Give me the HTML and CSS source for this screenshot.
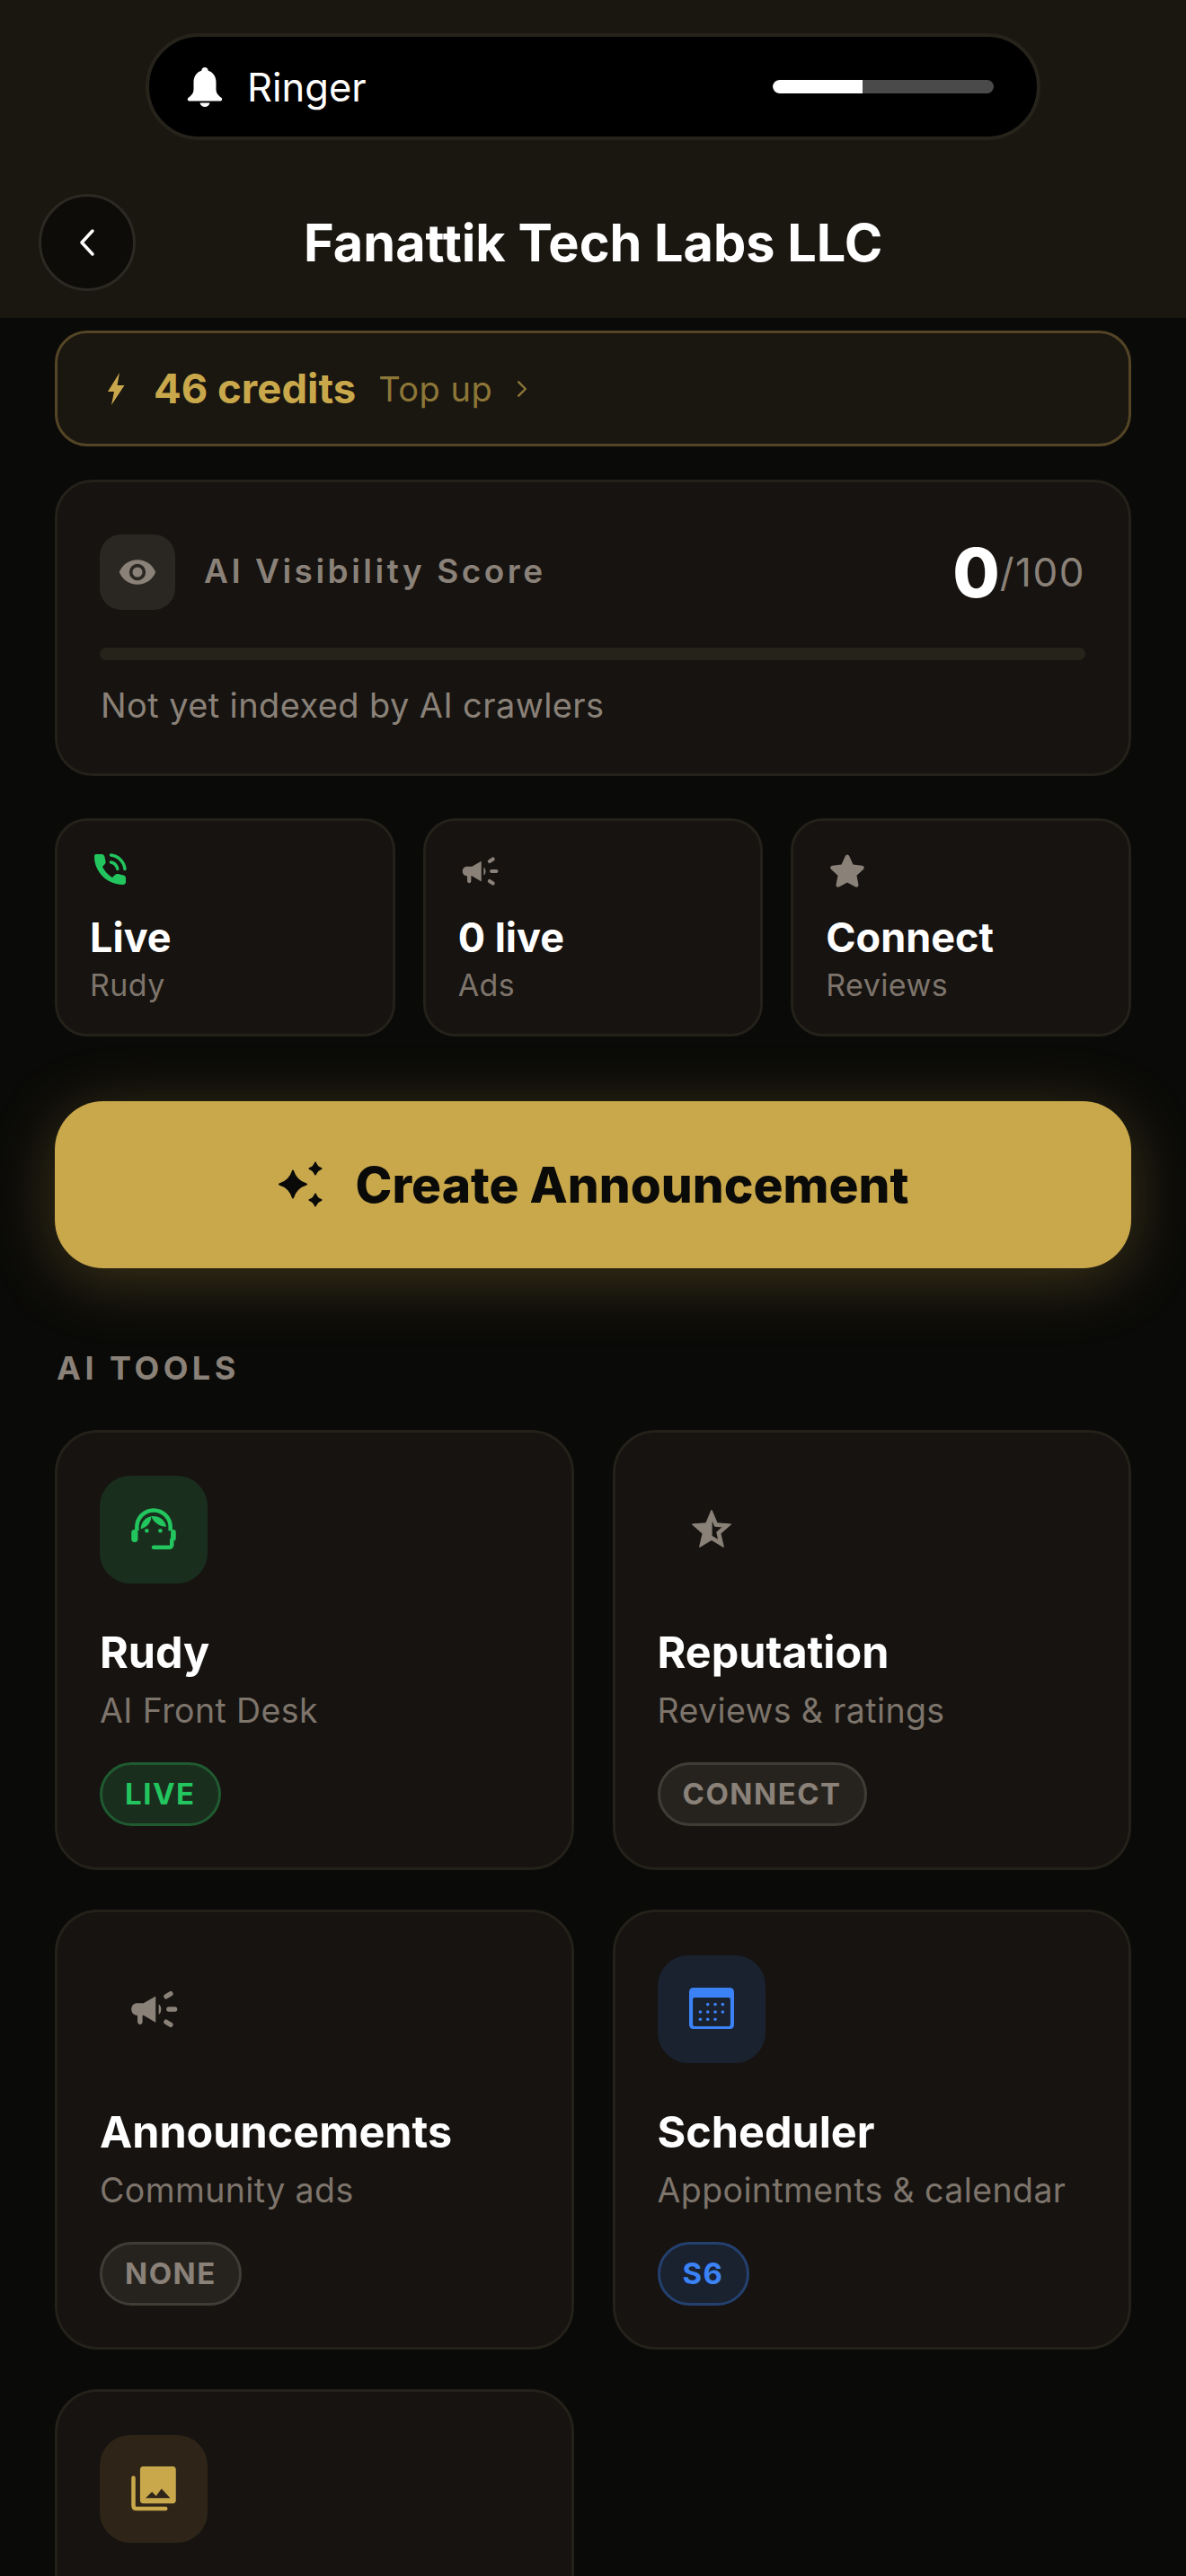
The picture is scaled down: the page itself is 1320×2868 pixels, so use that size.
FILE: index.html
```html
<!DOCTYPE html>
<html>
<head>
    <title>Fanattik Tech Labs LLC</title>
    <link rel="stylesheet" href="styles.css">
</head>
<body>
    <header class="top-bar">
        <div class="ringer">
            <svg class="ringer-bell" viewBox="0 0 40 44"><path d="M20 0c-2.200 0-3.600 1.700-3.800 3.800C10.600 5.500 7.500 10.500 7.500 16.500v7.500c0 4-1.500 6.500-5.500 9.500-2 1.500-1.500 4 1 4h34c2.500 0 3-2.500 1-4-4-3-5.500-5.500-5.500-9.500v-7.500c0-6-3.100-11-8.700-12.700C23.600 1.700 22.200 0 20 0z" fill="#fff"/><path d="M14.500 39.500h11c-.6 2.800-2.700 4.500-5.500 4.500s-4.900-1.700-5.500-4.500z" fill="#fff"/></svg>
            <span class="ringer-label">Ringer</span>
            <div class="ringer-slider"><div class="ringer-level"></div></div>
        </div>
        <div class="title-row">
            <button class="back-btn"><svg viewBox="0 0 20 32"><path d="M16 3 4 16l12 13" fill="none" stroke="#fff" stroke-width="3.500" stroke-linecap="round" stroke-linejoin="round"/></svg></button>
            <h1>Fanattik Tech Labs LLC</h1>
        </div>
    </header>

    <main class="content">
        <div class="credits">
            <svg class="credits-bolt" viewBox="0 0 20 36"><path d="M14 0 1 21h7L5 36 19.500 14H11.500z" fill="#c9a84c"/></svg>
            <span class="credits-count">46 credits</span>
            <span class="credits-topup">Top up</span>
            <svg class="credits-chevron" viewBox="0 0 12 20"><path d="m2.500 3 7 7-7 7" fill="none" stroke="#8c7738" stroke-width="2.200" stroke-linecap="round" stroke-linejoin="round"/></svg>
        </div>

        <section class="score-card">
            <div class="score-head">
                <div class="score-icon">
                    <svg viewBox="0 0 24 24"><path d="M12 4.500C7 4.500 2.700 7.600 1 12c1.700 4.400 6 7.500 11 7.500s9.300-3.100 11-7.500c-1.700-4.400-6-7.500-11-7.500zM12 17a5 5 0 1 1 0-10 5 5 0 0 1 0 10zm0-8a3 3 0 1 0 0 6 3 3 0 0 0 0-6z" fill="#8a8178"/></svg>
                </div>
                <span class="score-title">AI Visibility Score</span>
                <div class="score-value"><b>0</b><span>/100</span></div>
            </div>
            <div class="score-track"></div>
            <p class="score-note">Not yet indexed by AI crawlers</p>
        </section>

        <div class="stats">
            <div class="stat">
                <svg class="stat-icon" viewBox="-2 -1 42 42"><path d="M2 1h6c2 0 3 1 3.500 3l1 5c.3 1.500-.2 2.500-1.200 3.500L9 15c2.500 5 6 9 11 12l3-3c1-1 2-1.300 3.500-1l6 1.500c1.500.4 2.500 1.500 2.500 3V32c0 2-1.500 3-3.500 3C15 35 0 21 0 4 0 2 .5 1 2 1z" fill="#22c55e"/><path d="M18.500 2c8 1 14.500 7 15.500 15.500M18.500 10c3.700.7 6.500 3.500 7.300 7.500" fill="none" stroke="#22c55e" stroke-width="3.500" stroke-linecap="round"/></svg>
                <div class="stat-value">Live</div>
                <div class="stat-label">Rudy</div>
            </div>
            <div class="stat">
                <svg class="stat-icon" viewBox="0 0 24 24"><use href="#megaphone"/></svg>
                <div class="stat-value">0 live</div>
                <div class="stat-label">Ads</div>
            </div>
            <div class="stat">
                <svg class="stat-icon" viewBox="0 .6 24 24"><path d="M12 2c.6 0 1 .4 1.300 1l2.400 5.300 5.700.7c1.300.2 1.800 1.500.8 2.400l-4.200 3.900 1.100 5.700c.3 1.300-1 2.200-2.100 1.500L12 19.700l-5 2.800c-1.100.7-2.400-.2-2.100-1.500L6 15.300l-4.200-3.900c-1-.9-.5-2.200.8-2.400l5.700-.7L10.700 3c.3-.6.700-1 1.300-1z" fill="#8a8178"/></svg>
                <div class="stat-value">Connect</div>
                <div class="stat-label">Reviews</div>
            </div>
        </div>

        <button class="cta">
            <svg class="cta-icon" viewBox="0 0 52 52"><path d="M17 10.500Q20.500 22 32 25.500 20.500 29 17 40.500 13.500 29 2 25.500 13.500 22 17 10.500zM42 1.500Q43.700 6.300 48.500 8 43.700 9.700 42 14.500 40.300 9.700 35.500 8 40.300 6.300 42 1.500zM42 36.500Q43.700 41.300 48.500 43 43.700 44.700 42 49.500 40.300 44.700 35.500 43 40.300 41.300 42 36.500z" fill="#0a0a08" stroke="#0a0a08" stroke-width="2" stroke-linejoin="round"/></svg>
            Create Announcement
        </button>

        <h2 class="section-label">AI TOOLS</h2>

        <div class="tools">
            <div class="tool">
                <div class="tool-icon tint-green">
                    <svg viewBox="0 0 24 24"><path d="M3.700 12.500v-1.800a8.300 8.300 0 0 1 16.600 0v1.800" fill="none" stroke="#22c55e" stroke-width="2"/><rect x="1" y="12" width="3.200" height="6.200" rx="1.500" fill="#22c55e"/><rect x="20.500" y="12" width="2.500" height="5.500" rx="1.200" fill="#22c55e"/><path d="M21 17v2.500c0 .8-.6 1.300-1.300 1.300H12" fill="none" stroke="#22c55e" stroke-width="2" stroke-linecap="round"/><path d="M10.800 5.400C7.500 6 5.800 8.500 5.600 11.700 8.800 10.800 10.800 8.500 10.800 5.400zM10.800 5.400C14.500 5 17.500 7 18.300 10.500 15 10.500 12 8.500 10.800 5.400z" fill="#22c55e"/><circle cx="8.600" cy="12.600" r="1" fill="#22c55e"/><circle cx="15.300" cy="12.600" r="1" fill="#22c55e"/></svg>
                </div>
                <div class="tool-name">Rudy</div>
                <div class="tool-sub">AI Front Desk</div>
                <span class="pill pill-green">LIVE</span>
            </div>
            <div class="tool">
                <div class="tool-icon">
                    <svg viewBox="0 0 24 24"><path transform="translate(.6 .6) scale(.95)" d="M22 9.240l-7.190-.62L12 2 9.190 8.630 2 9.240l5.460 4.730L5.820 21 12 17.270 18.180 21l-1.630-7.030L22 9.240zM12 15.400V6.100l1.710 4.040 4.380.38-3.320 2.880 1 4.280L12 15.400z" fill="#8a8178" stroke="#8a8178" stroke-width=".6" stroke-linejoin="round"/></svg>
                </div>
                <div class="tool-name">Reputation</div>
                <div class="tool-sub">Reviews &amp; ratings</div>
                <span class="pill pill-grey">CONNECT</span>
            </div>
            <div class="tool">
                <div class="tool-icon">
                    <svg viewBox="0 0 24 24"><use href="#megaphone"/></svg>
                </div>
                <div class="tool-name">Announcements</div>
                <div class="tool-sub">Community ads</div>
                <span class="pill pill-grey">NONE</span>
            </div>
            <div class="tool">
                <div class="tool-icon tint-blue">
                    <svg viewBox="0 0 24 24"><path d="M2.900 1.300h18.200c1.100 0 2 .9 2 2v16.500c0 1.100-.9 2-2 2H2.900c-1.100 0-2-.9-2-2V3.300c0-1.100.9-2 2-2zm.8 4.900c-.6 0-1 .4-1 1v12.200c0 .6.4 1 1 1h16.600c.6 0 1-.4 1-1V7.200c0-.6-.4-1-1-1z" fill="#3b82f6" fill-rule="evenodd"/><g fill="#3b82f6"><circle cx="10.100" cy="9.600" r=".8"/><circle cx="13.800" cy="9.600" r=".8"/><circle cx="17.500" cy="9.600" r=".8"/><circle cx="6.400" cy="13.300" r=".8"/><circle cx="10.100" cy="13.300" r=".8"/><circle cx="13.800" cy="13.300" r=".8"/><circle cx="17.500" cy="13.300" r=".8"/><circle cx="6.400" cy="17" r=".8"/><circle cx="10.100" cy="17" r=".8"/><circle cx="13.800" cy="17" r=".8"/></g></svg>
                </div>
                <div class="tool-name">Scheduler</div>
                <div class="tool-sub">Appointments &amp; calendar</div>
                <span class="pill pill-blue">S6</span>
            </div>
            <div class="tool">
                <div class="tool-icon tint-gold">
                    <svg viewBox="0 0 24 24"><path d="M6.800.9h14.700c.9 0 1.500.7 1.500 1.500v15.300c0 .9-.6 1.500-1.500 1.500H6.800c-.9 0-1.500-.6-1.500-1.500V2.400c0-.8.6-1.500 1.500-1.500zM8 16.600h12.200l-4.300-4.700-2.700 3.700-2-2.200z" fill="#c9a84c" fill-rule="evenodd"/><path d="M2 6.500v13.700c0 1 .6 1.600 1.600 1.600h14.300" fill="none" stroke="#c9a84c" stroke-width="2" stroke-linecap="round"/></svg>
                </div>
            </div>
        </div>
    </main>

    <!-- shared megaphone icon -->
    <svg class="icon-defs">
        <symbol id="megaphone" viewBox="0 0 24 24">
            <path d="M1 12c0-1.800 1.200-3 3-3h3l6-3.500v13L7 15H6.500v3c0 1-.5 1.500-1.200 1.500S4 19 4 18v-3c-1.800 0-3-1.200-3-3z" fill="#8a8178"/>
            <path d="M14.500 9.500c1.600.7 1.600 4.300 0 5z" fill="#8a8178"/>
            <path d="M18.200 5.700l2.200-1.400M19.500 12h3M18.200 18.300l2.200 1.400" stroke="#8a8178" stroke-width="2.400" stroke-linecap="round" fill="none"/>
        </symbol>
    </svg>
</body>
</html>
```
FILE: styles.css
```css
html, body {
    height: 2868px;
    overflow: hidden;
}

body {
    font-family: 'Inter', 'Liberation Sans', sans-serif;
    background-color: #0a0a08;
    color: #fff;
    margin: 0;
}

.icon-defs {
    display: none;
}

/* top bar with ringer pill and page title */
.top-bar {
    background-color: #1a1610;
    height: 354px;
    padding-top: 37px;
    box-sizing: border-box;
}

.ringer {
    width: 996px;
    height: 119px;
    margin: 0 auto;
    padding: 0 48px 0 42px;
    box-sizing: border-box;
    display: flex;
    align-items: center;
    background-color: #000;
    border: 4px solid #26231b;
    border-radius: 60px;
}

.ringer-bell {
    width: 40px;
    height: 44px;
    margin-right: 27px;
}

.ringer-label {
    font-size: 43.500px;
    flex: 1;
}

.ringer-slider {
    width: 246px;
    height: 15px;
    background-color: #4a4a4a;
    border-radius: 8px;
    overflow: hidden;
}

.ringer-level {
    width: 100px;
    height: 100%;
    background-color: #fff;
    border-radius: 8px 0 0 8px;
}

.title-row {
    display: flex;
    align-items: center;
    margin-top: 60px;
    padding-left: 43px;
}

.back-btn {
    width: 108px;
    height: 108px;
    padding: 0;
    display: flex;
    align-items: center;
    justify-content: center;
    background-color: #0d0c09;
    border: 3px solid #2b2922;
    border-radius: 50%;
}

.back-btn svg {
    width: 20px;
    height: 32px;
}

.title-row h1 {
    margin: 0 0 0 187px;
    font-size: 57.600px;
    font-weight: 700;
    line-height: 72px;
    white-space: nowrap;
}

.content {
    padding: 14px 61px 0;
}

/* credits strip */
.credits {
    height: 129px;
    box-sizing: border-box;
    display: flex;
    align-items: center;
    padding-left: 55px;
    background-color: #1a1610;
    border: 3px solid #544526;
    border-radius: 36px;
}

.credits-bolt {
    width: 20px;
    height: 36px;
    margin-right: 32px;
}

.credits-count {
    font-size: 45.500px;
    font-weight: 700;
    color: #c9a84c;
    margin-right: 25px;
}

.credits-topup {
    font-size: 38px;
    letter-spacing: .5px;
    color: #8c7738;
    margin-right: 26px;
}

.credits-chevron {
    width: 14px;
    height: 22px;
}

/* visibility score card */
.score-card {
    margin-top: 37px;
    height: 330px;
    box-sizing: border-box;
    padding: 58px 48px 0 47px;
    background-color: #161310;
    border: 3px solid #24211a;
    border-radius: 42px;
}

.score-head {
    display: flex;
    align-items: center;
}

.score-icon {
    width: 84px;
    height: 84px;
    display: flex;
    align-items: center;
    justify-content: center;
    background-color: #2a2722;
    border-radius: 24px;
}

.score-icon svg {
    width: 44px;
    height: 44px;
}

.score-title {
    flex: 1;
    margin-left: 32px;
    padding-bottom: 3px;
    font-size: 37px;
    font-weight: 600;
    letter-spacing: 3.500px;
    color: #8a8178;
}

.score-value {
    display: flex;
    align-items: center;
}

.score-value b {
    font-size: 76px;
    font-weight: 800;
    line-height: 84px;
}

.score-value span {
    font-size: 44px;
    letter-spacing: 1.500px;
    color: #8a8178;
}

.score-track {
    height: 14px;
    margin-top: 42px;
    background-color: #26231b;
    border-radius: 7px;
}

.score-note {
    margin: 25px 0 0 1px;
    font-size: 38px;
    line-height: 50px;
    letter-spacing: .4px;
    color: #8a8178;
}

/* three small status cards */
.stats {
    display: grid;
    grid-template-columns: repeat(3, 1fr);
    gap: 31px;
    margin-top: 47px;
}

.stat {
    height: 243px;
    box-sizing: border-box;
    padding: 35px 36px 0;
    background-color: #161310;
    border: 3px solid #24211a;
    border-radius: 36px;
}

.stat-icon {
    display: block;
    width: 42px;
    height: 42px;
    margin-left: 3px;
}

.stat-value {
    margin-top: 24px;
    font-size: 45px;
    font-weight: 700;
    line-height: 58px;
}

.stat-label {
    margin-top: 2px;
    font-size: 34px;
    letter-spacing: .4px;
    line-height: 44px;
    color: #7d746b;
}

/* main call to action */
.cta {
    width: 100%;
    height: 186px;
    margin-top: 72px;
    display: flex;
    align-items: center;
    justify-content: center;
    gap: 35px;
    font-family: inherit;
    font-size: 55px;
    font-weight: 800;
    color: #0a0a08;
    background-color: #c9a84c;
    border: none;
    border-radius: 54px;
    box-shadow: 0 12px 72px rgba(201, 168, 76, 0.28);
}

.cta-icon {
    width: 52px;
    height: 52px;
}

.section-label {
    margin: 88px 0 0 2px;
    font-size: 36px;
    font-weight: 700;
    line-height: 46px;
    letter-spacing: 4.500px;
    color: #8a8178;
}

/* tool cards */
.tools {
    display: grid;
    grid-template-columns: repeat(2, 1fr);
    gap: 44px 43px;
    margin-top: 46px;
}

.tool {
    height: 490px;
    box-sizing: border-box;
    padding: 48px 47px 0;
    background-color: #161310;
    border: 3px solid #24211a;
    border-radius: 48px;
}

.tool-icon {
    width: 120px;
    height: 120px;
    display: flex;
    align-items: center;
    justify-content: center;
    border-radius: 34px;
}

.tool-icon svg {
    width: 54px;
    height: 54px;
}

.tint-green {
    background-color: #1a2e1e;
}

.tint-blue {
    background-color: #1a2230;
}

.tint-gold {
    background-color: #2e2518;
}

.tool-name {
    margin-top: 46px;
    font-size: 48.500px;
    font-weight: 700;
    line-height: 62px;
}

.tool-sub {
    margin-top: 9px;
    font-size: 37.500px;
    line-height: 50px;
    letter-spacing: .4px;
    color: #7d746b;
}

.pill {
    display: inline-block;
    margin-top: 32px;
    padding: 0 25px;
    font-size: 33px;
    font-weight: 700;
    line-height: 65px;
    letter-spacing: 1.500px;
    border: 3px solid;
    border-radius: 36px;
}

.pill-green {
    color: #22c55e;
    background-color: #1a2e1e;
    border-color: #1f5a30;
}

.pill-grey {
    color: #8a8178;
    background-color: #26231f;
    border-color: #3f3c36;
}

.pill-blue {
    color: #3b82f6;
    background-color: #1a2230;
    border-color: #24406e;
}
```
